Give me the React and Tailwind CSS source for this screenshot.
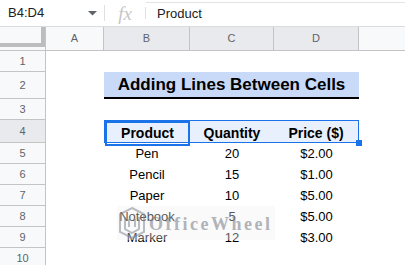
import React from "react";

const HB = "border-[#c4c4c4]";

function RowHead({ n, h, sel }) {
  return (
    <div
      className={`flex items-center justify-center border-r border-b ${HB} text-[11px] text-[#5f6368] ${sel ? "bg-[#e8eaed]" : "bg-[#f8f9fa]"} ${h}`}
    >
      {n}
    </div>
  );
}

function Cell({ children, bold }) {
  return (
    <div className={`flex items-center justify-center text-black ${bold ? "font-bold text-[14px]" : "text-[13px]"}`}>
      {children}
    </div>
  );
}

const data = [
  ["Pen", "20", "$2.00"],
  ["Pencil", "15", "$1.00"],
  ["Paper", "10", "$5.00"],
  ["Notebook", "5", "$5.00"],
  ["Marker", "12", "$3.00"],
];

export default function App() {
  return (
    <div
      className="relative w-[405px] h-[265px] overflow-hidden bg-white"
      style={{ fontFamily: '"Liberation Sans", Arial, sans-serif' }}
    >
      {/* formula bar */}
      <div className="flex h-[27px] border-b border-[#dadce0] bg-white">
        <div className="flex w-[104px] items-center pl-2 pr-[7px]">
          <span className="text-[13px] text-[#202124]">B4:D4</span>
          <svg className="ml-auto" width="9" height="5" viewBox="0 0 9 5">
            <path d="M0 0 L9 0 L4.5 4.5 Z" fill="#5f6368" />
          </svg>
        </div>
        <div className="my-[5px] w-px bg-[#e0e0e0]" />
        <div className="flex w-[40px] items-center justify-center">
          <span
            className="text-[19px] italic leading-none text-[#c6c6c6]"
            style={{ fontFamily: '"Liberation Serif", "Times New Roman", serif' }}
          >
            fx
          </span>
        </div>
        <div className="my-[7px] w-px bg-[#e0e0e0]" />
        <div className="mt-[2px] flex flex-1 items-center border-t border-[#e3e3e3] pb-[2px] pl-[11px] text-[13px] text-[#202124]">
          Product
        </div>
      </div>

      {/* grid */}
      <div className="grid grid-cols-[46px_58px_86px_84px_85px_1fr]">
        {/* column header row */}
        <div className={`h-[24px] border-r border-b ${HB} bg-[#f8f9fa]`}>
          <div className="h-[20px] w-[45px] border-r-4 border-b-4 border-[#bdbdbd]" />
        </div>
        <div className={`flex h-[24px] items-center justify-center border-r border-b ${HB} bg-[#f8f9fa] text-[11px] text-[#5f6368]`}>A</div>
        <div className={`flex h-[24px] items-center justify-center border-r border-b ${HB} bg-[#e8eaed] text-[11px] text-[#5f6368]`}>B</div>
        <div className={`flex h-[24px] items-center justify-center border-r border-b ${HB} bg-[#e8eaed] text-[11px] text-[#5f6368]`}>C</div>
        <div className={`flex h-[24px] items-center justify-center border-r border-b ${HB} bg-[#e8eaed] text-[11px] text-[#5f6368]`}>D</div>
        <div className={`h-[24px] border-b ${HB} bg-[#f8f9fa]`} />

        {/* row 1 */}
        <RowHead n="1" h="h-[21px]" />
        <div className="col-span-5" />

        {/* row 2 */}
        <RowHead n="2" h="h-[27px]" />
        <div />
        <div className="col-span-3 flex h-[27px] items-center justify-center border-b-2 border-black bg-[#c9daf8] pt-[1px] text-[17px] font-bold text-black">
          Adding Lines Between Cells
        </div>
        <div />

        {/* row 3 */}
        <RowHead n="3" h="h-[21px]" />
        <div className="col-span-5" />

        {/* row 4 */}
        <RowHead n="4" h="h-[23px]" sel />
        <div />
        <div className="relative col-span-3 grid h-[23px] grid-cols-[85px_84px_1fr] border border-[#1a73e8] bg-[#e8f0fe]">
          <div className="flex items-center justify-center border-2 border-[#1a73e8] text-[14px] font-bold text-black">
            Product
          </div>
          <div className="flex items-center justify-center text-[14px] font-bold text-black">Quantity</div>
          <div className="flex items-center justify-center text-[14px] font-bold text-black">Price ($)</div>
          <div className="absolute -bottom-[4px] -right-[4px] h-[6px] w-[6px] bg-[#1a73e8]" />
        </div>
        <div />

        {/* data rows */}
        {data.map((r, i) => (
          <React.Fragment key={i}>
            <RowHead n={String(i + 5)} h="h-[21px]" />
            <div />
            <Cell>{r[0]}</Cell>
            <Cell>{r[1]}</Cell>
            <Cell>{r[2]}</Cell>
            <div />
          </React.Fragment>
        ))}

        {/* row 10 */}
        <RowHead n="10" h="h-[21px]" />
        <div className="col-span-5" />
      </div>

      {/* watermark */}
      <div className="pointer-events-none absolute left-[117px] top-[206px] flex h-[34px] items-center gap-[2px] bg-[#f2f2f2]/50 pr-[3px] opacity-70">
        <svg width="30" height="34" viewBox="0 0 30 34">
          <path d="M15 2 L27 8 L27 26 L15 32 L3 26 L3 8 Z" fill="none" stroke="#9ba0a8" strokeWidth="2" />
          <path d="M8 11 L8 23 L15 27 L22 23 L22 11" fill="none" stroke="#9ba0a8" strokeWidth="2" />
          <path d="M12 13 L12 21 M18 13 L18 21" stroke="#9ba0a8" strokeWidth="2" />
        </svg>
        <span
          className="pt-[2px] text-[18px] font-bold tracking-[2.5px] text-[#8f949c]"
          style={{ fontFamily: '"Liberation Serif", "Times New Roman", serif' }}
        >
          OfficeWheel
        </span>
      </div>
    </div>
  );
}
